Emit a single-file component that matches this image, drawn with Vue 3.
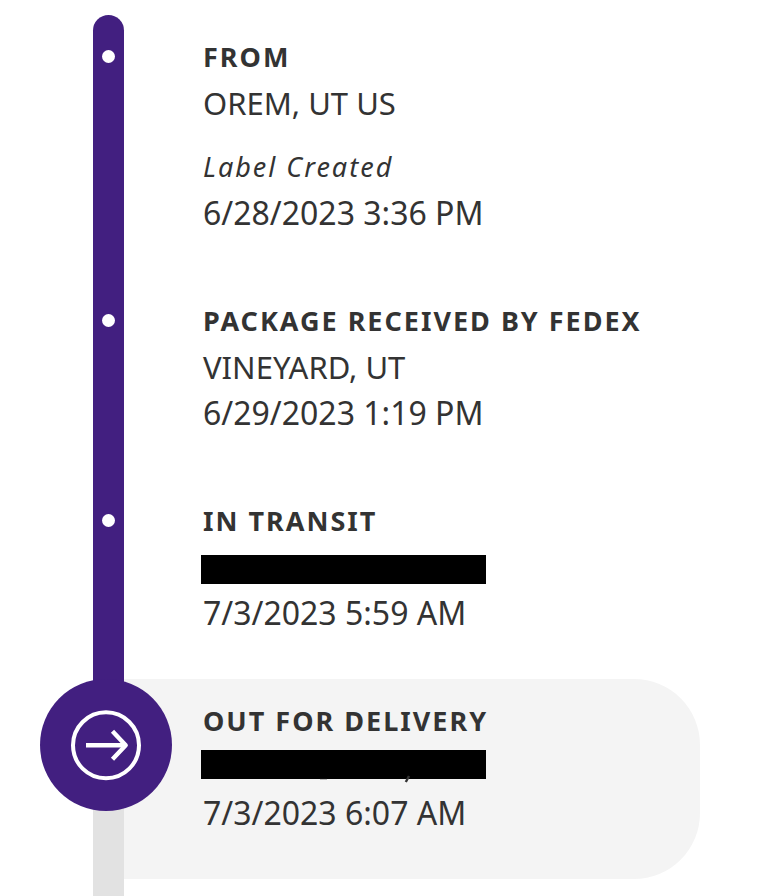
<script setup>
const events = [
  { title: 'FROM', place: 'OREM, UT US', status: 'Label Created', time: '6/28/2023 3:36 PM' },
  { title: 'PACKAGE RECEIVED BY FEDEX', place: 'VINEYARD, UT', time: '6/29/2023 1:19 PM' },
  { title: 'IN TRANSIT', time: '7/3/2023 5:59 AM' },
  { title: 'OUT FOR DELIVERY', time: '7/3/2023 6:07 AM', current: true },
]
</script>

<template>
  <main class="tracking">
    <ol class="timeline">
      <li v-for="event in events" :key="event.title" class="event" :class="{ current: event.current }">
        <div class="rail">
          <span v-if="!event.current" class="dot"></span>
          <svg v-else class="badge" viewBox="0 0 132 132" aria-hidden="true">
            <circle cx="66" cy="66" r="66" fill="#421f80" />
            <g fill="none" stroke="#fff">
              <circle cx="66" cy="66.3" r="33" stroke-width="4" />
              <path d="M46 66.2H85" stroke-width="4.4" />
              <path d="M72.5 52.2L85.7 66.2L72.5 80.2" stroke-width="4.4" stroke-linejoin="round" />
            </g>
          </svg>
        </div>
        <div class="details">
          <h2 class="title">{{ event.title }}</h2>
          <p v-if="event.place" class="place">{{ event.place }}</p>
          <div v-else class="hidden-place">
            <svg class="redaction" viewBox="0 0 285 34" aria-hidden="true">
              <rect width="285" height="29" />
              <g v-if="event.current" fill="none" stroke="#333">
                <path d="M208 26L204.8 32" stroke-width="2.4" />
                <path d="M119 29.1H126" stroke-width="0.5" />
              </g>
            </svg>
          </div>
          <p v-if="event.status" class="status">{{ event.status }}</p>
          <p class="time">{{ event.time }}</p>
        </div>
      </li>
    </ol>
    <div class="remaining"></div>
  </main>
</template>

<style>
body {
  margin: 0;
  background: #fff;
}
</style>

<style scoped>
.tracking {
  display: flex;
  flex-direction: column;
  min-height: 100vh;
  box-sizing: border-box;
  padding: 15px 68px 0 93px;
  color: #333;
  font-family: "Noto Sans", "Open Sans", sans-serif;
}

.timeline {
  margin: 0;
  padding: 0;
  list-style: none;
}

.event {
  display: grid;
  grid-template-columns: 31px 1fr;
}

.rail {
  position: relative;
  display: flex;
  justify-content: center;
  background: #421f80;
}

.event:first-child .rail {
  border-radius: 16px 16px 0 0;
}

.dot {
  width: 13px;
  height: 13px;
  margin-top: 35px;
  border-radius: 50%;
  background: #fff;
}

.current .rail {
  background: #e2e2e2;
}

.badge {
  position: absolute;
  top: 0;
  left: -53px;
  width: 132px;
  height: 132px;
}

.current .rail::before {
  content: "";
  width: 31px;
  height: 66px;
  background: #421f80;
}

.details {
  padding: 19px 0 43px 79px;
}

.current .details {
  border-radius: 0 66px 66px 0;
  background: #f4f4f4;
}

.title,
.place,
.status,
.time {
  margin: 0;
  line-height: 46px;
}

.title {
  font-size: 27px;
  font-weight: 700;
  letter-spacing: 2px;
}

.place {
  font-size: 31px;
}

.time {
  font-size: 32px;
}

.status {
  margin-top: 18px;
  font-size: 27px;
  font-style: italic;
  letter-spacing: 2px;
}

.hidden-place {
  height: 46px;
  box-sizing: border-box;
  padding-top: 11px;
}

.current .hidden-place {
  padding-top: 6px;
}

.redaction {
  display: block;
  width: 285px;
  height: 34px;
  margin-left: -2px;
}

.remaining {
  flex: 1;
  width: 31px;
  background: #e2e2e2;
}
</style>
